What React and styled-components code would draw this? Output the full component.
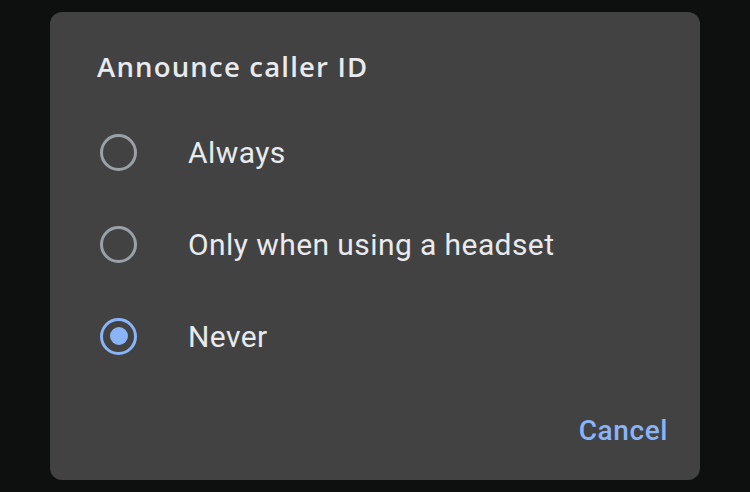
import React from "react";
import styled, { createGlobalStyle } from "styled-components";

const Global = createGlobalStyle`
  html, body { margin: 0; padding: 0; background: #0e0f0f; }
  body { width: 750px; height: 492px; overflow: hidden; }
`;

const Page = styled.div`
  width: 750px;
  height: 492px;
  padding: 12px 50px 12px 50px;
  box-sizing: border-box;
`;

const Dialog = styled.div`
  width: 650px;
  height: 468px;
  background: #424242;
  border-radius: 12px;
  display: flex;
  flex-direction: column;
  box-sizing: border-box;
`;

const Title = styled.h2`
  margin: 0;
  height: 94px;
  box-sizing: border-box;
  padding: 38px 0 0 47px;
  font-family: "Open Sans", Roboto, sans-serif;
  font-weight: 600;
  font-size: 27.5px;
  line-height: 34px;
  letter-spacing: 1.2px;
  color: #e8eaed;
`;

const List = styled.div`
  display: flex;
  flex-direction: column;
`;

const Row = styled.label`
  height: 92px;
  display: flex;
  align-items: center;
  padding-left: 50px;
`;

const Radio = styled.span`
  width: 37px;
  height: 37px;
  box-sizing: border-box;
  border-radius: 50%;
  border: 3.5px solid ${(p) => (p.$checked ? "#8ab4f8" : "#9aa0a6")};
  display: flex;
  align-items: center;
  justify-content: center;
  flex: none;
  &::after {
    content: "";
    width: 18px;
    height: 18px;
    border-radius: 50%;
    background: #8ab4f8;
    display: ${(p) => (p.$checked ? "block" : "none")};
  }
`;

const Label = styled.span`
  margin-left: 51px;
  font-family: Roboto, sans-serif;
  font-size: 30px;
  color: #e8eaed;
  letter-spacing: 0.42px;
`;

const Footer = styled.div`
  flex: 1;
  display: flex;
  justify-content: flex-end;
  align-items: flex-start;
  padding: 32px 32px 0 0;
`;

const TextButton = styled.button`
  background: none;
  border: none;
  padding: 0;
  font-family: Roboto, sans-serif;
  font-weight: 500;
  font-size: 28px;
  line-height: 34px;
  color: #8ab4f8;
  letter-spacing: 0.6px;
`;

const options = ["Always", "Only when using a headset", "Never"];

export default function App() {
  return (
    <Page>
      <Global />
      <Dialog>
        <Title>Announce caller ID</Title>
        <List>
          {options.map((o, i) => (
            <Row key={o}>
              <Radio $checked={i === 2} />
              <Label>{o}</Label>
            </Row>
          ))}
        </List>
        <Footer>
          <TextButton>Cancel</TextButton>
        </Footer>
      </Dialog>
    </Page>
  );
}
